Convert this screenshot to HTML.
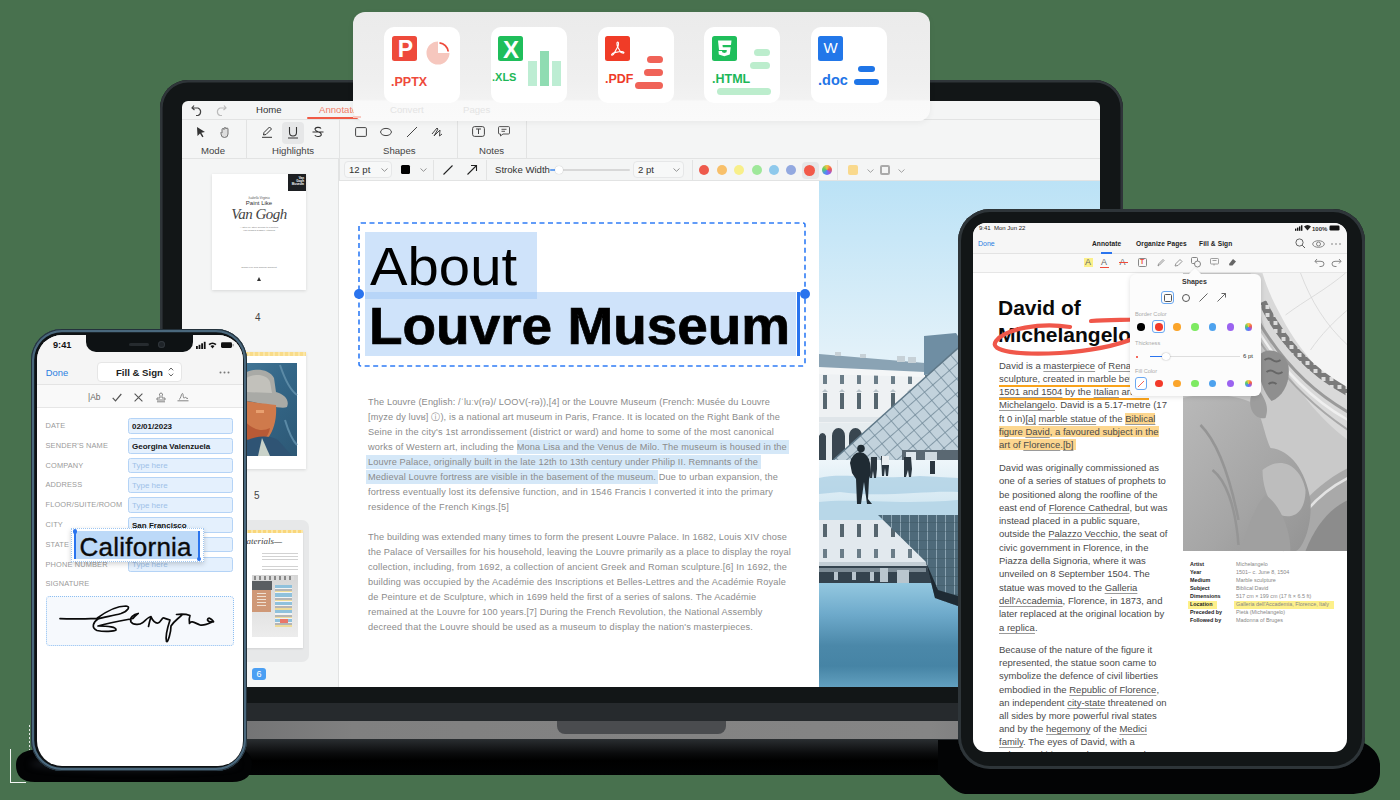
<!DOCTYPE html>
<html><head><meta charset="utf-8">
<style>
*{box-sizing:border-box;margin:0;padding:0}
html,body{width:1400px;height:800px;overflow:hidden;background:#48714e;font-family:"Liberation Sans",sans-serif}
.a{position:absolute}
svg{position:absolute;overflow:visible}
/* laptop */
#lid{left:160px;top:80px;width:963px;height:650px;background:#121617;border-radius:28px 28px 0 0;box-shadow:inset 0 0 0 2.6px #2f3539}
#base1{left:160px;top:703px;width:963px;height:18px;background:#262a2d}
#base2{left:160px;top:721px;width:963px;height:18px;background:linear-gradient(90deg,#6a6b6d,#808080 20%,#858585 80%,#6a6b6d)}
#notch{left:557px;top:721px;width:169px;height:12.5px;background:#4a4c4f;border-radius:0 0 8px 8px}
#base3{left:160px;top:739px;width:963px;height:36px;background:linear-gradient(#2a2e31,#0a0b0c 40%,#000 60%,#020304)}
#screen{left:182px;top:101px;width:918px;height:586px;background:#f4f5f5;border-radius:6px 6px 0 0;overflow:hidden}
#screen .t{position:absolute;white-space:nowrap;color:#333;font-size:9.6px;line-height:12px}
#screen .body{color:#8b8b8b;font-size:9.2px;line-height:12px}
.card{width:75.5px;height:76px;background:#fff;border-radius:10px}
.ic{width:25px;height:25px;border-radius:2.5px}
.ict{width:25px;height:25px;color:#fff;font-weight:bold;text-align:center;line-height:25px}
.ft{font-weight:bold;font-size:12.5px;line-height:14px;white-space:nowrap}
.bar{border-radius:4px}
.plab{font-size:7.4px;color:#9a9a9a;line-height:10px;white-space:nowrap;letter-spacing:0.15px}
.pin{width:104.5px;height:15.5px;background:#e4f0fd;border:1px solid #b4d3f6;border-radius:2.5px}
.pval{font-size:8px;font-weight:bold;color:#151515;line-height:11px;white-space:nowrap}
.pph{font-size:8px;color:#9ec1e8;line-height:11px;white-space:nowrap}
.tt{white-space:nowrap;line-height:1.2}
.tb{white-space:nowrap;font-size:9.5px;line-height:13px;color:#4a4a4a}
.tb u{text-decoration-color:#9a9a9a;text-decoration-thickness:0.6px;text-underline-offset:1.5px}
.yh{background:#fcd68f}
.tk{font-size:5.4px;font-weight:bold;color:#222;white-space:nowrap;line-height:7px}
.tv{font-size:5.4px;color:#888;white-space:nowrap;line-height:7px}
.dot{width:7.5px;height:7.5px;border-radius:50%}
.hl{position:absolute;height:1px;background:#e2e3e3}
.vl{position:absolute;width:1px;background:#e2e3e3}
</style></head>
<body>
<div id="lid" class="a"></div>
<div id="base1" class="a"></div>
<div id="base2" class="a"></div>
<div id="notch" class="a"></div>
<div id="base3" class="a"></div>
<div id="screen" class="a">
  <!-- tab bar -->
  <svg style="left:9px;top:3px" width="14" height="12" viewBox="0 0 14 12"><path d="M3 1.5 L1 4 L3.5 6 M1.2 4 H7 A4 4 0 0 1 7 11.5 H5" fill="none" stroke="#444" stroke-width="1.2"/></svg>
  <svg style="left:31px;top:3px" width="14" height="12" viewBox="0 0 14 12"><path d="M11 1.5 L13 4 L10.5 6 M12.8 4 H7 A4 4 0 0 0 7 11.5 H9" fill="none" stroke="#bbb" stroke-width="1.2"/></svg>
  <div class="t" style="left:74px;top:3px;color:#333">Home</div>
  <div class="t" style="left:137px;top:3px;color:#f07f6b">Annotate</div>
  <div class="a" style="left:125px;top:16px;width:54px;height:2px;background:#f05a45;border-radius:1px"></div>
  <div class="t" style="left:210px;top:3px;color:#333">Convert</div>
  <div class="t" style="left:283px;top:3px;color:#333">Pages</div>
  <div class="hl" style="left:0;top:18px;width:918px"></div>
  <!-- toolbar -->
  <div class="t" style="left:19px;top:44px;color:#444">Mode</div>
  <div class="t" style="left:90px;top:44px;color:#444">Highlights</div>
  <div class="t" style="left:201px;top:44px;color:#444">Shapes</div>
  <div class="t" style="left:297px;top:44px;color:#444">Notes</div>
  <div class="vl" style="left:64px;top:19px;height:39px"></div>
  <div class="vl" style="left:157px;top:19px;height:39px"></div>
  <div class="vl" style="left:275px;top:19px;height:39px"></div>
  <div class="vl" style="left:344px;top:19px;height:39px"></div>
  <!-- mode icons -->
  <svg style="left:13px;top:25px" width="12" height="12" viewBox="0 0 12 12"><path d="M2 1 L10 6 L6.3 6.8 L8.5 10.5 L7.3 11.2 L5 7.5 L2.5 10 Z" fill="#333"/></svg>
  <svg style="left:37px;top:25px" width="12" height="12" viewBox="0 0 12 12"><path d="M3 7 V3.5 a1 1 0 0 1 2 0 V2.5 a1 1 0 0 1 2 0 V3 a1 1 0 0 1 2 0 V8 a3.5 3.5 0 0 1 -7 0 V6" fill="#ddd" stroke="#666" stroke-width="0.9"/></svg>
  <!-- highlight icons -->
  <svg style="left:79px;top:25px" width="13" height="12" viewBox="0 0 13 12"><path d="M2.5 9 L3 6.5 L8.5 1 L10.5 3 L5 8.5 Z M1 11.3 H11" fill="none" stroke="#333" stroke-width="1"/></svg>
  <div class="a" style="left:100px;top:21px;width:22px;height:22px;background:#e6e7e8;border-radius:4px"></div>
  <svg style="left:105px;top:25px" width="12" height="13" viewBox="0 0 12 13"><path d="M2.5 1 V6.5 a3.5 3.5 0 0 0 7 0 V1 M1 12 H11" fill="none" stroke="#333" stroke-width="1.1"/></svg>
  <svg style="left:130px;top:25px" width="12" height="12" viewBox="0 0 12 12"><path d="M9 2.5 C8 1 3 0.8 3 3.3 C3 6 9.3 5.5 9.3 8.5 C9.3 11 4 11 2.8 9.3 M0.5 6 H11.5" fill="none" stroke="#333" stroke-width="1.1"/></svg>
  <!-- shape icons -->
  <svg style="left:173px;top:26px" width="12" height="10" viewBox="0 0 12 10"><rect x="0.6" y="0.6" width="10.8" height="8.8" rx="1" fill="none" stroke="#444" stroke-width="1"/></svg>
  <svg style="left:198px;top:26px" width="12" height="10" viewBox="0 0 12 10"><ellipse cx="6" cy="5" rx="5.4" ry="3.6" fill="none" stroke="#444" stroke-width="1"/></svg>
  <svg style="left:224px;top:25px" width="12" height="12" viewBox="0 0 12 12"><path d="M1 11 L11 1" stroke="#444" stroke-width="1"/></svg>
  <svg style="left:249px;top:25px" width="12" height="12" viewBox="0 0 12 12"><path d="M1 8 L6 2 L7 3 L3 10 L9 4 L8.5 10 L11 8" fill="none" stroke="#444" stroke-width="1"/></svg>
  <!-- notes icons -->
  <svg style="left:290px;top:25px" width="13" height="11" viewBox="0 0 13 11"><rect x="0.6" y="0.6" width="11.8" height="9.8" rx="2" fill="none" stroke="#444" stroke-width="1"/><path d="M4 3 H9 M6.5 3 V8" stroke="#444" stroke-width="1"/></svg>
  <svg style="left:316px;top:25px" width="12" height="11" viewBox="0 0 12 11"><path d="M1.5 0.6 H10.5 a1 1 0 0 1 1 1 V7 a1 1 0 0 1 -1 1 H5 L2.5 10 V8 H1.5 a1 1 0 0 1 -1 -1 V1.6 a1 1 0 0 1 1 -1 Z M3.5 3.3 H8.5 M3.5 5.3 H7" fill="none" stroke="#444" stroke-width="0.9"/></svg>
  <div class="hl" style="left:0;top:57px;width:918px"></div>

  <!-- format bar -->
  <div class="a" style="left:157px;top:58px;width:761px;height:22px;background:#f4f5f5;border-left:1px solid #e2e3e3;border-bottom:1px solid #e2e3e3"></div>
  <div class="a" style="left:162px;top:60px;width:48px;height:17px;border:1px solid #e6e7e8;border-radius:4px;background:#f7f8f8"></div>
  <div class="t" style="left:167px;top:63px">12 pt</div>
  <svg style="left:199px;top:67px" width="7" height="4" viewBox="0 0 7 4"><path d="M0.5 0.5 L3.5 3.3 L6.5 0.5" fill="none" stroke="#888" stroke-width="0.9"/></svg>
  <div class="a" style="left:219px;top:64px;width:9px;height:9px;background:#000;border-radius:1.5px"></div>
  <svg style="left:238px;top:67px" width="7" height="4" viewBox="0 0 7 4"><path d="M0.5 0.5 L3.5 3.3 L6.5 0.5" fill="none" stroke="#888" stroke-width="0.9"/></svg>
  <div class="vl" style="left:251px;top:59px;height:21px"></div>
  <svg style="left:261px;top:64px" width="10" height="10" viewBox="0 0 10 10"><path d="M0.5 9.5 L9.5 0.5" stroke="#222" stroke-width="1.1"/></svg>
  <svg style="left:285px;top:64px" width="10" height="10" viewBox="0 0 10 10"><path d="M0.5 9.5 L9.5 0.5 M4 0.5 H9.5 V6" fill="none" stroke="#222" stroke-width="1.1"/></svg>
  <div class="vl" style="left:304px;top:59px;height:21px"></div>
  <div class="t" style="left:313px;top:63px">Stroke Width</div>
  <div class="a" style="left:368px;top:68px;width:80px;height:2px;background:#d8d8d8;border-radius:1px"></div>
  <div class="a" style="left:368px;top:68px;width:8px;height:2px;background:#6aa3f0;border-radius:1px"></div>
  <div class="a" style="left:373px;top:65px;width:8px;height:8px;background:#fff;border-radius:50%;box-shadow:0 0 1px rgba(0,0,0,.3)"></div>
  <div class="a" style="left:451px;top:60px;width:51px;height:17px;border:1px solid #e6e7e8;border-radius:4px;background:#f7f8f8"></div>
  <div class="t" style="left:456px;top:63px">2 pt</div>
  <svg style="left:491px;top:67px" width="7" height="4" viewBox="0 0 7 4"><path d="M0.5 0.5 L3.5 3.3 L6.5 0.5" fill="none" stroke="#888" stroke-width="0.9"/></svg>
  <div class="vl" style="left:510px;top:59px;height:21px"></div>
  <div class="a" style="left:517px;top:64px;width:10px;height:10px;border-radius:50%;background:#ee5a4c"></div>
  <div class="a" style="left:535px;top:64px;width:10px;height:10px;border-radius:50%;background:#f8c06a"></div>
  <div class="a" style="left:552px;top:64px;width:10px;height:10px;border-radius:50%;background:#f8ef8a"></div>
  <div class="a" style="left:570px;top:64px;width:10px;height:10px;border-radius:50%;background:#9fe89a"></div>
  <div class="a" style="left:587px;top:64px;width:10px;height:10px;border-radius:50%;background:#8ec9ec"></div>
  <div class="a" style="left:604px;top:64px;width:10px;height:10px;border-radius:50%;background:#93a9e0"></div>
  <div class="a" style="left:620px;top:61px;width:17px;height:17px;border-radius:4px;background:#e6e7e8"></div>
  <div class="a" style="left:622px;top:64px;width:11px;height:11px;border-radius:50%;background:#f25a4a"></div>
  <div class="a" style="left:640px;top:64px;width:10px;height:10px;border-radius:50%;background:conic-gradient(#f6c343,#f25a4a,#8e5cf2,#4a90f0,#5fd05f,#f6c343)"></div>
  <div class="vl" style="left:655px;top:59px;height:21px"></div>
  <div class="a" style="left:666px;top:64px;width:10px;height:10px;border-radius:2px;background:#f9d98d"></div>
  <svg style="left:685px;top:68px" width="7" height="4" viewBox="0 0 7 4"><path d="M0.5 0.5 L3.5 3.3 L6.5 0.5" fill="none" stroke="#999" stroke-width="0.9"/></svg>
  <div class="a" style="left:698px;top:64px;width:10px;height:10px;border-radius:2px;border:2px solid #aaa"></div>
  <svg style="left:716px;top:68px" width="7" height="4" viewBox="0 0 7 4"><path d="M0.5 0.5 L3.5 3.3 L6.5 0.5" fill="none" stroke="#999" stroke-width="0.9"/></svg>
  <!-- sidebar -->
  <div class="vl" style="left:156px;top:58px;height:528px"></div>
  <!-- sidebar thumbs -->
  <div class="a" style="left:30px;top:73px;width:94px;height:116px;background:#fff;box-shadow:0 1px 3px rgba(0,0,0,.12)"></div>
  <div class="a" style="left:106px;top:73px;width:18px;height:17px;background:#1d1f22"></div>
  <div class="a" style="left:109px;top:76px;width:13px;font-size:3px;line-height:3.2px;color:#fff;text-align:right;font-weight:bold">Van<br>Gogh<br>Museum</div>
  <div class="a" style="left:55px;top:95px;width:44px;text-align:center;font-size:3px;color:#555;font-style:italic">Isabella Virginia</div>
  <div class="a" style="left:40px;top:99px;width:74px;text-align:center;font-size:6px;color:#333">Paint Like</div>
  <div class="a" style="left:35px;top:104px;width:84px;text-align:center;font-family:'Liberation Serif',serif;font-style:italic;font-size:15px;line-height:18px;color:#444;letter-spacing:-0.5px">Van Gogh</div>
  <div class="a" style="left:45px;top:125px;width:64px;text-align:center;font-size:2.5px;line-height:3px;color:#777">A Step-by-Step Course to Painting<br>Van Gogh's Classic Artworks</div>
  <div class="a" style="left:45px;top:165px;width:64px;text-align:center;font-size:2.5px;color:#777">Susan Lee and Joanne Shumelt</div>
  <div class="a" style="left:75px;top:176px;width:4px;height:4px;background:#333;clip-path:polygon(50% 0,100% 100%,0 100%)"></div>
  <div class="t" style="left:73px;top:211px;font-size:10px;color:#444">4</div>
  <div class="a" style="left:28px;top:251px;width:96px;height:117px;background:#fff;box-shadow:0 1px 3px rgba(0,0,0,.12)"></div>
  <div class="a" style="left:28px;top:251px;width:96px;height:4px;background:repeating-linear-gradient(90deg,#f9dc8a 0 3px,#fbe7a9 3px 5px)"></div>
  <svg style="left:36px;top:262px" width="79" height="93" viewBox="218 363 79 93"><defs><linearGradient id="vgb" x1="0" y1="0" x2="1" y2="1"><stop offset="0" stop-color="#4a7d9c"/><stop offset="0.5" stop-color="#336687"/><stop offset="1" stop-color="#2d5875"/></linearGradient></defs>
    <rect x="218" y="363" width="79" height="93" fill="url(#vgb)"/>
    <path d="M240 378 C245 368 268 366 274 378 L276 392 C284 394 290 400 287 407 C280 410 260 402 240 400 Z" fill="#a9aaa6"/>
    <path d="M244 380 C250 374 266 372 270 382 L272 393 L246 392 Z" fill="#c2c1bb"/>
    <path d="M242 400 C255 403 268 404 276 405 C277 418 274 430 268 438 C258 444 246 440 242 430 Z" fill="#cf7a4c"/>
    <path d="M244 420 C252 430 262 432 270 428 C268 440 258 446 248 444 Z" fill="#b85a36"/>
    <path d="M256 410 h8 v3 h-8 Z" fill="#e8a070"/>
    <path d="M240 445 C250 436 268 434 278 440 L292 456 H240 Z" fill="#2f5474"/>
    <path d="M262 438 L270 456 L258 456 Z" fill="#c9d2c9"/>
    <path d="M280 365 C285 380 290 390 297 395 M285 420 C288 430 292 440 297 445" stroke="#5b8aa6" stroke-width="2" fill="none"/>
  </svg>
  <div class="t" style="left:72px;top:389px;font-size:10px;color:#444">5</div>
  <div class="a" style="left:22px;top:419px;width:105px;height:142px;background:#e7e8e9;border-radius:7px"></div>
  <div class="a" style="left:26px;top:429px;width:95px;height:118px;background:#fff;box-shadow:0 1px 2px rgba(0,0,0,.1)"></div>
  <div class="a" style="left:26px;top:429px;width:95px;height:3px;background:repeating-linear-gradient(90deg,#f9d67a 0 3px,#fbe7a9 3px 5px)"></div>
  <div class="a" style="left:57px;top:435px;font-family:'Liberation Serif',serif;font-style:italic;font-size:9px;color:#444">Materials—</div>
  <div class="a" style="left:30px;top:452px;width:18px;height:16px;background:repeating-linear-gradient(#f0b640 0 1.2px,transparent 1.2px 3px)"></div>
  <div class="a" style="left:80px;top:452px;width:36px;height:18px;background:repeating-linear-gradient(#d2d2d2 0 0.8px,transparent 0.8px 3.2px)"></div>
  <div class="a" style="left:70px;top:474px;width:46px;height:62px;background:linear-gradient(#d6d6d6,#ececec)"></div>
  <div class="a" style="left:70px;top:480px;width:20px;height:9px;background:#5a5e62"></div>
  <div class="a" style="left:70px;top:489px;width:19px;height:22px;background:#cf9877"></div>
  <div class="a" style="left:75px;top:492px;width:9px;height:14px;background:repeating-linear-gradient(#efe0d2 0 1px,transparent 1px 3px)"></div>
  <div class="a" style="left:93px;top:484px;width:17px;height:42px;background:repeating-linear-gradient(#8fc1dc 0 3px,#f3f3f3 3px 4.5px,#b5b5b5 4.5px 6px,#eedc9a 6px 7.5px,#f3f3f3 7.5px 8.5px)"></div>
  <div class="a" style="left:98px;top:518px;width:8px;height:4px;background:#e9776a"></div>
  <div class="a" style="left:72px;top:475px;width:40px;height:4px;background:repeating-linear-gradient(90deg,#888 0 2px,#ddd 2px 5px)"></div>
  <div class="a" style="left:70px;top:567px;width:14px;height:12px;background:#4b9ff3;border-radius:3px;color:#fff;font-size:9px;line-height:12px;text-align:center">6</div>
  <!-- document -->
  <div class="a" style="left:157px;top:80px;width:480px;height:506px;background:#fff"></div>
  <!-- highlights -->
  <div class="a" style="left:335px;top:338.6px;width:272px;height:14px;background:#d5e8f8"></div>
  <div class="a" style="left:184px;top:353.6px;width:395px;height:14px;background:#d5e8f8"></div>
  <div class="a" style="left:184px;top:368.6px;width:292px;height:14px;background:#d5e8f8"></div>
  <div class="t body" style="left:186px;top:294.6px;letter-spacing:0.128px">The Louvre (English: /ˈluːv(rə)/ LOOV(-rə)),[4] or the Louvre Museum (French: Musée du Louvre</div>
  <div class="t body" style="left:186px;top:309.6px;letter-spacing:0.140px">[myze dy luvʁ] ⓘ), is a national art museum in Paris, France. It is located on the Right Bank of the</div>
  <div class="t body" style="left:186px;top:324.6px;letter-spacing:0.184px">Seine in the city's 1st arrondissement (district or ward) and home to some of the most canonical</div>
  <div class="t body" style="left:186px;top:339.6px;letter-spacing:0.148px">works of Western art, including the Mona Lisa and the Venus de Milo. The museum is housed in the</div>
  <div class="t body" style="left:186px;top:354.6px;letter-spacing:0.135px">Louvre Palace, originally built in the late 12th to 13th century under Philip II. Remnants of the</div>
  <div class="t body" style="left:186px;top:369.6px;letter-spacing:0.144px">Medieval Louvre fortress are visible in the basement of the museum. Due to urban expansion, the</div>
  <div class="t body" style="left:186px;top:384.6px;letter-spacing:0.184px">fortress eventually lost its defensive function, and in 1546 Francis I converted it into the primary</div>
  <div class="t body" style="left:186px;top:399.6px;letter-spacing:0.187px">residence of the French Kings.[5]</div>
  <div class="t body" style="left:186px;top:429.8px;letter-spacing:0.125px">The building was extended many times to form the present Louvre Palace. In 1682, Louis XIV chose</div>
  <div class="t body" style="left:186px;top:444.8px;letter-spacing:0.134px">the Palace of Versailles for his household, leaving the Louvre primarily as a place to display the royal</div>
  <div class="t body" style="left:186px;top:459.8px;letter-spacing:0.181px">collection, including, from 1692, a collection of ancient Greek and Roman sculpture.[6] In 1692, the</div>
  <div class="t body" style="left:186px;top:474.8px;letter-spacing:0.157px">building was occupied by the Académie des Inscriptions et Belles-Lettres and the Académie Royale</div>
  <div class="t body" style="left:186px;top:489.8px;letter-spacing:0.163px">de Peinture et de Sculpture, which in 1699 held the first of a series of salons. The Académie</div>
  <div class="t body" style="left:186px;top:504.8px;letter-spacing:0.141px">remained at the Louvre for 100 years.[7] During the French Revolution, the National Assembly</div>
  <div class="t body" style="left:186px;top:519.8px;letter-spacing:0.171px">decreed that the Louvre should be used as a museum to display the nation's masterpieces.</div>
  <!-- title -->
  <div class="a" style="left:183px;top:131px;width:172px;height:67px;background:rgba(160,200,245,.5)"></div>
  <div class="a" style="left:183px;top:191px;width:431px;height:64px;background:rgba(160,200,245,.5)"></div>
  <svg style="left:176px;top:121px" width="448" height="145" viewBox="0 0 448 145"><rect x="1" y="1" width="446" height="143" rx="2" fill="none" stroke="#2f7cf6" stroke-width="1.6" stroke-dasharray="5 3.5"/></svg>
  <div class="a" style="left:171.5px;top:187.5px;width:10px;height:10px;border-radius:50%;background:#2a74ee"></div>
  <div class="a" style="left:618px;top:187.5px;width:10px;height:10px;border-radius:50%;background:#2a74ee"></div>
  <div class="a" style="left:615px;top:191px;width:2.5px;height:64px;background:#2a74ee"></div>
  <div class="a" style="left:187.5px;top:136px;font-size:53px;line-height:60px;color:#000;white-space:nowrap;transform:scaleX(1.062);transform-origin:0 0">About</div>
  <div class="a" style="left:186.5px;top:196px;font-size:51px;line-height:60px;font-weight:bold;color:#000;-webkit-text-stroke:0.7px #000;white-space:nowrap;transform:scaleX(1.077);transform-origin:0 0">Louvre Museum</div>
  <svg id="photo" style="left:637px;top:80px" width="281" height="506" viewBox="819 181 281 506">
    <defs>
      <linearGradient id="sky" x1="0" y1="0" x2="0" y2="1"><stop offset="0" stop-color="#bbe2f6"/><stop offset="0.34" stop-color="#e2f1f9"/><stop offset="1" stop-color="#eef7fb"/></linearGradient>
      <linearGradient id="water" x1="0" y1="0" x2="0" y2="1"><stop offset="0" stop-color="#94c8e0"/><stop offset="0.3" stop-color="#6eaacb"/><stop offset="0.6" stop-color="#4b88a9"/><stop offset="0.8" stop-color="#4684a5"/><stop offset="1" stop-color="#62a0bf"/></linearGradient>
      <linearGradient id="ground" x1="0" y1="0" x2="0" y2="1"><stop offset="0" stop-color="#eef6fa"/><stop offset="1" stop-color="#c9e2ef"/></linearGradient>
      <pattern id="lat" width="11" height="11" patternUnits="userSpaceOnUse" patternTransform="rotate(-41)"><rect width="11" height="11" fill="#c2d2dc"/><path d="M0 0 H11 M0 0 V11" stroke="#6d8595" stroke-width="1.4"/></pattern>
      <pattern id="latr" width="9" height="9" patternUnits="userSpaceOnUse"><rect width="9" height="9" fill="#4e6a7a"/><path d="M0 0 V9" stroke="#b5cad6" stroke-width="1.2"/><path d="M0 0 H9" stroke="#3a5260" stroke-width="0.8"/></pattern>
      <pattern id="win" width="17" height="60" patternUnits="userSpaceOnUse" x="821" y="372"><rect width="17" height="60" fill="#eef1f3"/><rect x="2" y="3" width="4" height="9" fill="#6b7d88"/><rect x="2" y="21" width="4" height="16" fill="#56666f"/><path d="M1 20 L4 17 L7 20 Z" fill="#b8c3ca"/></pattern>
      <pattern id="winr" width="17" height="46" patternUnits="userSpaceOnUse" x="821" y="522"><rect width="17" height="46" fill="#e2e9ee"/><rect x="2" y="2" width="4" height="13" fill="#56666f"/><rect x="2" y="27" width="4" height="9" fill="#6b7d88"/></pattern>
    </defs>
    <rect x="819" y="181" width="281" height="506" fill="url(#sky)"/>
    <!-- building -->
    <rect x="819" y="364" width="112" height="96" fill="url(#win)"/>
    <path d="M819 354 L925 363 L925 373 L819 369 Z" fill="#8aa3b4"/>
    <path d="M819 367 L925 372 L925 377 L819 374 Z" fill="#f4f6f7"/>
    <path d="M835 352 h6 v4 h-6 Z M860 354 h6 v4 h-6 Z M897 356 h8 v6 h-8 Z M908 357 h8 v6 h-8 Z" fill="#c7d1d7"/>
    <rect x="819" y="417" width="112" height="5" fill="#dfe5e9"/>
    <path d="M819 423 H931 V462 H819 Z" fill="#e6ecef"/>
    <path d="M819 462 V436 a4 6 0 0 1 7 0 V462 Z M832 462 V436 a6.5 8 0 0 1 13 0 V462 Z M849 462 V436 a6.5 8 0 0 1 13 0 V462 Z" fill="#394650"/>
    <path d="M924 336 L956 333 L958 336 V372 L924 375 Z" fill="#6f8ea3"/>
    <!-- pyramid -->
    <path d="M830 463 L958 348 L958 463 Z" fill="url(#lat)"/>
    <path d="M830 463 L958 348" stroke="#5f7888" stroke-width="1.6"/>
    <rect x="902" y="450" width="56" height="11" fill="#5a6872"/><rect x="906" y="452" width="10" height="8" fill="#dfe7ec"/><rect x="925" y="452" width="12" height="8" fill="#cfd9df"/>
    <!-- ground -->
    <rect x="819" y="460" width="140" height="62" fill="url(#ground)"/>
    <path d="M819 478 C840 472 880 480 920 476 L958 478 V492 C930 490 880 498 840 492 L819 494 Z" fill="#a8cde2" opacity=".7"/>
    <path d="M819 502 C850 498 900 505 958 500 V522 H819 Z" fill="#b8d7e8"/>
    <!-- people -->
    <path d="M850 463 q2 -10 10 -11 q8 1 10 11 l1 10 l-2 6 l-1 20 l4 5 h-5 l-3 -22 l-3 22 h-4 l-1 -25 l-4 -6 Z" fill="#1f2b33"/>
    <circle cx="861" cy="448.5" r="3.8" fill="#1f2b33"/>
    <path d="M871 457 h6 v12 l-1 9 h-2 l-1 -7 l-1 7 h-2 Z M881 456 h8 v10 l-1 10 h-2 l-1 -8 l-1 8 h-2 Z M904 457 h7 l1 12 l-1 8 h-2 l-1 -7 l-2 7 h-2 Z M930 461 h5 v13 h-5 Z" fill="#2b3740"/>
    <rect x="882" y="456" width="7" height="9" fill="#e9eef1"/>
    <!-- reflection -->
    <rect x="819" y="520" width="140" height="48" fill="url(#winr)"/>
    <rect x="819" y="562" width="140" height="6" fill="#c3ced5"/>
    <rect x="819" y="566" width="140" height="18" fill="#34434e"/>
    <path d="M819 568 H926 V572 H819 Z" fill="#7d8c96"/>
    <path d="M834 572 h4 v8 h-4 Z M852 572 h4 v8 h-4 Z M870 572 h4 v9 h-4 Z M880 568 h8 v14 h-8 Z M897 570 h12 v16 h-12 Z" fill="#b9c6ce"/>
    <rect x="819" y="583" width="140" height="104" fill="url(#water)"/>
    <path d="M878 515 L958 515 L958 606 L935 598 L926 562 Z" fill="url(#latr)"/>
        <path d="M926 562 L935 598 L958 606 L958 596 L938 590 Z" fill="#1e2a33"/>
  </svg>
</div>
<div class="a" style="left:10px;top:749px;width:1px;height:34px;background:#f4f6f4"></div>
<div class="a" style="left:10px;top:782px;width:16px;height:1px;background:#f4f6f4"></div>
<div class="a" style="left:29px;top:725px;width:1px;height:25px;background:repeating-linear-gradient(#e8ece8 0 2px,transparent 2px 4px)"></div>
<!-- phone shadow -->
<svg style="left:0;top:0" width="1400" height="800" viewBox="0 0 1400 800"><path d="M16 765 C16 752 28 749 45 749 L235 749 C248 749 252 756 252 765 C252 775 246 782 232 782 L35 782 C22 782 16 776 16 765 Z" fill="#020304"/></svg>
<div class="a" style="left:30px;top:757px;width:208px;height:14px;border-radius:50%;background:#15181d;filter:blur(3px)"></div>
<!-- phone -->
<div class="a" style="left:31px;top:329px;width:216px;height:442px;border-radius:31px;background:#0e1214;box-shadow:inset 0 0 0 1px #24323c,inset 0 0 0 3.2px #4a687d"></div>
<div class="a" id="pscreen" style="left:36.5px;top:335px;width:206.5px;height:431px;border-radius:25px;background:#fff;overflow:hidden">
  <div class="a" style="left:0;top:0;width:207px;height:50px;background:#f5f5f5;border-bottom:1px solid #e4e4e4"></div>
  <div class="a" style="left:0;top:50px;width:207px;height:22.5px;background:#f9f9f9;border-bottom:1px solid #e6e6e6"></div>
</div>
<div class="a" style="left:86px;top:333px;width:106.5px;height:18.5px;background:#0e1214;border-radius:0 0 10px 10px"></div>
<div class="a" style="left:129px;top:343px;width:20px;height:3px;background:#262b2f;border-radius:2px"></div>
<div class="a" style="left:157.5px;top:341px;width:7px;height:7px;background:#1f2429;border-radius:50%;box-shadow:inset 0 0 0 1px #30363b"></div>
<div class="a" style="left:53px;top:340px;font-size:9.2px;font-weight:bold;color:#111;line-height:10px">9:41</div>
<svg style="left:196px;top:341px" width="40" height="8" viewBox="0 0 40 8"><rect x="0" y="5" width="1.8" height="3" fill="#111"/><rect x="2.6" y="3.8" width="1.8" height="4.2" fill="#111"/><rect x="5.2" y="2.3" width="1.8" height="5.7" fill="#111"/><rect x="7.8" y="0.8" width="1.8" height="7.2" fill="#111"/><path d="M12.5 3 A6 6 0 0 1 20.5 3 L19.3 4.3 A4.2 4.2 0 0 0 13.7 4.3 Z M14.5 5 A3.3 3.3 0 0 1 18.5 5 L16.5 7.5 Z" fill="#111"/><rect x="25" y="1.3" width="11" height="5.6" rx="1.3" fill="#111"/><rect x="36.6" y="3" width="1" height="2.3" fill="#888"/></svg>
<div class="a" style="left:45.7px;top:367px;font-size:9.4px;color:#2a7de1;line-height:11px">Done</div>
<div class="a" style="left:96.7px;top:361.7px;width:85px;height:20px;background:#fff;border:1px solid #e6e6e6;border-radius:4px"></div>
<div class="a" style="left:116px;top:367px;font-size:9.6px;font-weight:bold;color:#222;line-height:11px">Fill &amp; Sign</div>
<svg style="left:168px;top:367px" width="6" height="10" viewBox="0 0 6 10"><path d="M0.8 3.3 L3 1 L5.2 3.3 M0.8 6.7 L3 9 L5.2 6.7" fill="none" stroke="#555" stroke-width="0.9"/></svg>
<svg style="left:219px;top:370.5px" width="12" height="3" viewBox="0 0 12 3"><circle cx="1.5" cy="1.5" r="1" fill="#777"/><circle cx="5.5" cy="1.5" r="1" fill="#777"/><circle cx="9.5" cy="1.5" r="1" fill="#777"/></svg>
<div class="a" style="left:88px;top:392px;font-size:8.4px;color:#666;line-height:11px">|Ab</div>
<svg style="left:112px;top:393px" width="10" height="9" viewBox="0 0 10 9"><path d="M0.7 4.8 L3.5 7.8 L9.3 1" fill="none" stroke="#555" stroke-width="1.2"/></svg>
<svg style="left:134px;top:393px" width="9" height="9" viewBox="0 0 9 9"><path d="M0.6 0.6 L8.4 8.4 M8.4 0.6 L0.6 8.4" stroke="#555" stroke-width="1.1"/></svg>
<svg style="left:156px;top:392px" width="10" height="11" viewBox="0 0 10 11"><path d="M5 1 a1.6 1.6 0 0 1 1 2.8 V6 H9 V8 H1 V6 H4 V3.8 A1.6 1.6 0 0 1 5 1 Z M1 9.8 H9" fill="none" stroke="#777" stroke-width="0.9"/></svg>
<svg style="left:177px;top:392px" width="12" height="11" viewBox="0 0 12 11"><path d="M2 7.5 C4 7 4 2 5.3 1.5 C6.5 1 6 7 7.2 6 C8 5.5 8.5 4.5 9 6 L11 6.5 M0.5 8.8 H11.5" fill="none" stroke="#777" stroke-width="0.9"/></svg>
<div class="a plab" style="left:45.5px;top:421.0px">DATE</div>
<div class="a pin" style="left:128px;top:418.25px"></div>
<div class="a pval" style="left:132px;top:420.5px">02/01/2023</div>
<div class="a plab" style="left:45.5px;top:441.0px">SENDER'S NAME</div>
<div class="a pin" style="left:128px;top:438.25px"></div>
<div class="a pval" style="left:132px;top:440.5px">Georgina Valenzuela</div>
<div class="a plab" style="left:45.5px;top:460.5px">COMPANY</div>
<div class="a pin" style="left:128px;top:457.75px"></div>
<div class="a pph" style="left:132px;top:460.0px">Type here</div>
<div class="a plab" style="left:45.5px;top:480.0px">ADDRESS</div>
<div class="a pin" style="left:128px;top:477.25px"></div>
<div class="a pph" style="left:132px;top:479.5px">Type here</div>
<div class="a plab" style="left:45.5px;top:500.0px">FLOOR/SUITE/ROOM</div>
<div class="a pin" style="left:128px;top:497.25px"></div>
<div class="a pph" style="left:132px;top:499.5px">Type here</div>
<div class="a plab" style="left:45.5px;top:520.0px">CITY</div>
<div class="a pin" style="left:128px;top:517.25px"></div>
<div class="a pval" style="left:132px;top:519.5px">San Francisco</div>
<div class="a plab" style="left:45.5px;top:539.5px">STATE</div>
<div class="a pin" style="left:128px;top:536.75px"></div>
<div class="a plab" style="left:45.5px;top:559.5px">PHONE NUMBER</div>
<div class="a pin" style="left:128px;top:556.75px"></div>
<div class="a pph" style="left:132px;top:559.0px">Type here</div>
<div class="a plab" style="left:45.5px;top:579px">SIGNATURE</div>
<!-- signature -->
<div class="a" style="left:46px;top:596px;width:187.5px;height:49.5px;border:1.2px dotted #8cbef2;border-radius:4px;background:#f6f9fd"></div>
<svg style="left:46px;top:596px" width="188" height="50" viewBox="46 596 188 50"><path d="M60 618.6 C72 619 85 618.8 97 618.3 C104 613 116 606 126 606 C131 606.5 128 611 121 613.5 C113 616 103 617 98 619 C93 622 91 628 97 630.5 C104 632 114 631.5 116 630 C117 627 108 626 98 626 C108 623 122 620.5 133 618.5 C136 615 139 613 138 613.5 C134 614 129 618 131 622 C133 625 140 625 142 623 C145 621 148 617 151 616.5 C150 620 149 624 148.5 626.5 M151 617 C153 621 155 623.5 158 623 C161 622 162 617 164 618 C166 619 169 619.5 170 620 C168 626 165 636 166.5 641.5 C168 643 171 632 171 626 C174 621 178 619 182 614.8 M176.5 614.5 C181 614 186 614 190 615.5 C189 618 189 621 189.5 623.5 C191 620 195 623 200 625 C205 626 210 623 213.5 621.5 C211 618 208 617 207.5 620 C208 622 211 622 213.5 621.8" fill="none" stroke="#0a0a0a" stroke-width="1.7" stroke-linecap="round" stroke-linejoin="round"/></svg>
<!-- california popup -->
<div class="a" style="left:70.5px;top:527.5px;width:133px;height:34.5px;background:#fff;border:1px dotted #9ec6f2;box-shadow:0 2px 5px rgba(0,0,0,.18)"></div>
<div class="a" style="left:75px;top:531px;width:124px;height:28px;background:#bcd9f8"></div>
<div class="a" style="left:79.5px;top:531.5px;font-size:26px;color:#0b0b0b;line-height:30px;white-space:nowrap;letter-spacing:0.25px;-webkit-text-stroke:0.35px #0b0b0b">California</div>
<div class="a" style="left:74.3px;top:531px;width:1.6px;height:28px;background:#2a74ee"></div>
<div class="a" style="left:72.8px;top:529px;width:4.6px;height:4.6px;border-radius:50%;background:#2a74ee"></div>
<div class="a" style="left:198px;top:531px;width:1.6px;height:28px;background:#2a74ee"></div>
<div class="a" style="left:196.5px;top:556.5px;width:4.6px;height:4.6px;border-radius:50%;background:#2a74ee"></div>
<!-- tablet shadow -->
<svg style="left:0;top:0" width="1400" height="800" viewBox="0 0 1400 800"><path d="M938 770 L938 774 C945 778 952 792 965 794 L1350 794 C1370 794 1380 785 1380 772 L1380 765 C1380 755 1372 746 1362 742 L1362 740 L938 740 Z" fill="#030405"/></svg>
<!-- tablet -->
<div class="a" style="left:957.5px;top:208.5px;width:407.5px;height:560.5px;border-radius:32px;background:#121617;box-shadow:inset 0 0 0 3px #2e3539"></div>
<div class="a" id="tscreen" style="left:973px;top:223px;width:374px;height:529px;border-radius:13px;background:#fff;overflow:hidden">
  <div class="a" style="left:0;top:0;width:374px;height:31px;background:#f6f6f6;border-bottom:1px solid #e3e3e3"></div>
  <div class="a" style="left:0;top:31px;width:374px;height:18.5px;background:#f9f9f9;border-bottom:1px solid #e6e6e6"></div>
  <div class="a tt" style="left:6.0px;top:1.5px;font-size:6px;color:#222">9:41&nbsp;&nbsp;Mon Jun 22</div>
  <svg style="left:322px;top:2px" width="46" height="6" viewBox="0 0 46 6"><rect x="0" y="3.6" width="1.4" height="2.2" fill="#111"/><rect x="2" y="2.6" width="1.4" height="3.2" fill="#111"/><rect x="4" y="1.4" width="1.4" height="4.4" fill="#111"/><rect x="6" y="0.3" width="1.4" height="5.5" fill="#111"/><path d="M9 1.5 A5.2 5.2 0 0 1 16 1.5 L12.5 5.6 Z" fill="#222"/><text x="17" y="5.6" font-size="6" font-weight="bold" font-family="Liberation Sans" fill="#333">100%</text><rect x="34.5" y="0.6" width="10" height="4.8" rx="1.2" fill="#111"/></svg>
  <div class="a tt" style="left:5.0px;top:16.5px;font-size:7px;color:#2a7de1">Done</div>
  <div class="a tt" style="left:119.0px;top:16.5px;font-size:6.6px;color:#222;font-weight:bold;letter-spacing:0.1px">Annotate</div>
  <div class="a tt" style="left:163.0px;top:16.5px;font-size:6.6px;color:#222;font-weight:bold;letter-spacing:0.1px">Organize Pages</div>
  <div class="a tt" style="left:226.0px;top:16.5px;font-size:6.6px;color:#222;font-weight:bold;letter-spacing:0.1px">Fill &amp; Sign</div>
  <div class="a" style="left:127.6px;top:29.0px;width:11.3px;height:2px;background:#2a74ee"></div>
  <svg style="left:322.0px;top:15.0px" width="11" height="11" viewBox="0 0 11 11"><circle cx="4.5" cy="4.5" r="3.6" fill="none" stroke="#555" stroke-width="0.9"/><path d="M7.2 7.2 L10 10" stroke="#555" stroke-width="1"/></svg>
  <svg style="left:339.0px;top:16.5px" width="13" height="8" viewBox="0 0 13 8"><ellipse cx="6.5" cy="4" rx="5.8" ry="3.3" fill="none" stroke="#777" stroke-width="0.9"/><circle cx="6.5" cy="4" r="2" fill="none" stroke="#777" stroke-width="0.9"/></svg>
  <svg style="left:358.0px;top:19.5px" width="10" height="2" viewBox="0 0 10 2"><circle cx="1" cy="1" r="0.8" fill="#777"/><circle cx="5" cy="1" r="0.8" fill="#777"/><circle cx="9" cy="1" r="0.8" fill="#777"/></svg>
  <!-- toolbar icons -->
  <div class="a" style="left:110.5px;top:34.5px;width:9.5px;height:9.5px;background:#fbf08a"></div>
  <div class="a tt" style="left:112.0px;top:34.0px;font-size:9px;color:#666">A</div>
  <div class="a tt" style="left:128.0px;top:34.0px;font-size:9px;color:#666">A</div>
  <div class="a" style="left:127.0px;top:43.5px;width:9px;height:1px;background:#f04a3a"></div>
  <div class="a tt" style="left:146.5px;top:34.0px;font-size:9px;color:#666">A</div>
  <div class="a" style="left:145.5px;top:39.0px;width:9.5px;height:1px;background:#f04a3a"></div>
  <div class="a" style="left:165.0px;top:35.0px;width:8.5px;height:9px;border:1px solid #888;border-radius:1.5px"></div>
  <div class="a tt" style="left:167.0px;top:35.0px;font-size:7px;color:#f04a3a;font-weight:bold">T</div>
  <svg style="left:184.0px;top:35.0px" width="8" height="9" viewBox="0 0 8 9"><path d="M1 8 L1.5 6 L6 1.5 L7 2.5 L2.5 7 Z" fill="none" stroke="#888" stroke-width="0.9"/></svg>
  <svg style="left:201.0px;top:35.0px" width="9" height="9" viewBox="0 0 9 9"><path d="M1 8 L2 5.5 L6 1.5 L8 3.5 L4 7.5 Z" fill="none" stroke="#888" stroke-width="0.9"/></svg>
  <svg style="left:218.0px;top:34.0px" width="10" height="11" viewBox="0 0 10 11"><rect x="0.5" y="0.5" width="6" height="6" rx="1" fill="none" stroke="#777" stroke-width="0.9"/><circle cx="6.5" cy="7" r="3" fill="#f9f9f9" stroke="#777" stroke-width="0.9"/></svg>
  <svg style="left:237.0px;top:35.0px" width="9" height="8" viewBox="0 0 9 8"><rect x="0.5" y="0.5" width="8" height="5.5" rx="0.8" fill="none" stroke="#888" stroke-width="0.8"/><path d="M2.5 2.5 H6.5 M4 6 V7.5" stroke="#888" stroke-width="0.8"/></svg>
  <svg style="left:255.0px;top:34.0px" width="9" height="10" viewBox="0 0 9 10"><path d="M1 7 L5 2 L8 4.5 L4.5 8.5 H1.5 Z" fill="#666"/></svg>
  <svg style="left:341.0px;top:35.0px" width="11" height="9" viewBox="0 0 11 9"><path d="M3 1 L1 3.3 L3 5.5 M1.2 3.3 H7 A3 2.6 0 0 1 7 8.5 H5.5" fill="none" stroke="#777" stroke-width="0.9"/></svg>
  <svg style="left:358.0px;top:35.0px" width="11" height="9" viewBox="0 0 11 9"><path d="M8 1 L10 3.3 L8 5.5 M9.8 3.3 H4 A3 2.6 0 0 0 4 8.5 H5.5" fill="none" stroke="#777" stroke-width="0.9"/></svg>
  <!-- statue photo -->
  <svg id="statue" style="left:209.5px;top:50px" width="165" height="278" viewBox="1182.5 273 165 278">
    <defs><pattern id="dent" width="8" height="8" patternUnits="userSpaceOnUse"><rect width="8" height="8" fill="#7a7a7a"/><rect x="1" y="1" width="4" height="4" fill="#dcdcdc"/></pattern>
    <linearGradient id="bod" x1="0" y1="0" x2="1" y2="1"><stop offset="0" stop-color="#b9b9b9"/><stop offset="0.6" stop-color="#a5a5a5"/><stop offset="1" stop-color="#939393"/></linearGradient></defs>
    <rect x="1182.5" y="273" width="165" height="278" fill="#c9c9c9"/>
    <path d="M1250 273 H1347.5 V440 C1320 420 1285 380 1265 330 C1258 310 1255 290 1250 273 Z" fill="#d9d9d9"/>
    <path d="M1262 273 H1347.5 V395 C1320 375 1295 345 1280 315 C1272 300 1266 287 1262 273 Z" fill="#f4f4f4"/>
    <path d="M1300 273 C1310 300 1325 325 1347 345 M1285 315 C1305 300 1325 290 1345 273 M1310 350 C1320 335 1335 320 1347 310" fill="none" stroke="#d5d5d5" stroke-width="0.8"/>
    <path d="M1262 302 C1280 340 1310 372 1347.5 392" fill="none" stroke="url(#dent)" stroke-width="8"/>
    <path d="M1256 318 C1280 360 1312 392 1347.5 412" fill="none" stroke="#9a9a9a" stroke-width="3"/>
    <path d="M1255 326 C1280 370 1315 402 1347.5 420" fill="none" stroke="#efefef" stroke-width="2.5"/>
    <path d="M1255 335 C1282 378 1318 410 1347.5 430" fill="none" stroke="#a8a8a8" stroke-width="2"/>
    <path d="M1275 551 C1290 510 1315 485 1347.5 468 V551 Z" fill="#a9a9a9"/>
    <path d="M1282 551 C1297 515 1320 492 1347.5 478" fill="none" stroke="#e3e3e3" stroke-width="2.5"/>
    <path d="M1305 551 C1315 525 1330 508 1347.5 500 V551 Z" fill="#8c8c8c"/>
    <!-- statue torso -->
    <path d="M1182.5 398 C1205 392 1235 395 1250 402 C1262 412 1262 430 1270 448 C1290 450 1305 470 1310 500 C1312 530 1300 551 1295 551 H1182.5 Z" fill="url(#bod)"/>
    <path d="M1258 356 C1266 346 1284 350 1288 366 C1290 382 1283 396 1271 401 C1263 393 1256 374 1258 356 Z" fill="#8f8f8f"/><path d="M1264 360 q4 -3 8 0 q4 3 8 0 M1266 372 q4 -3 8 0 q4 3 8 0 M1268 384 q4 -3 8 0" fill="none" stroke="#666" stroke-width="2"/>
    <path d="M1255 385 C1262 395 1270 405 1265 418 C1255 420 1248 410 1250 398 Z" fill="#9d9d9d"/>
    <path d="M1200 425 C1215 440 1228 470 1238 520 M1212 470 C1225 480 1235 505 1238 545" fill="none" stroke="#959595" stroke-width="2.5"/>
    <path d="M1262 470 C1280 455 1300 465 1305 490 C1305 510 1295 520 1280 515 C1270 505 1262 490 1262 470 Z" fill="#bdbdbd"/>
    <path d="M1240 551 C1248 525 1255 505 1265 495 C1280 505 1290 530 1290 551 Z" fill="#a0a0a0"/>
  </svg>
  <!-- title -->
  <div class="a tt" style="left:25.0px;top:73.0px;font-size:21px;font-weight:bold;color:#0a0a0a;line-height:24px">David of</div>
  <div class="a tt" style="left:25.0px;top:100.0px;font-size:21px;font-weight:bold;color:#0a0a0a;line-height:24px">Michelangelo</div>
  <svg style="left:0.0px;top:50.0px" width="200" height="100" viewBox="973 273 200 100"><path d="M1070 327 C1040 322 1005 329 996 341 C988 352 1020 355 1060 353 C1090 351 1118 345 1135 338" fill="none" stroke="#f0574a" stroke-width="4.2" stroke-linecap="round"/><path d="M1091 321 C1105 320 1120 320 1135 319.5" fill="none" stroke="#f0574a" stroke-width="4.2" stroke-linecap="round"/></svg>
  <div class="a" style="left:26.0px;top:161.5px;width:165px;height:2px;background:#f9a31b"></div>
  <div class="a" style="left:26.0px;top:175.0px;width:150px;height:2px;background:#f9a31b"></div>
  <div class="a tb" style="left:26.0px;top:135.5px">David is a <u>masterpiece</u> of <u>Renaissance</u></div>
  <div class="a tb" style="left:26.0px;top:148.8px">sculpture, created in marble between</div>
  <div class="a tb" style="left:26.0px;top:162.1px"><u>1501 and 1504</u> by the <u>Italian</u> artist</div>
  <div class="a tb" style="left:26.0px;top:175.4px"><u>Michelangelo</u>. David is a 5.17-metre (17</div>
  <div class="a tb" style="left:26.0px;top:188.7px">ft 0 in)<u>[a]</u> <u>marble statue</u> of the <span class="yh"><u>Biblical</u></span></div>
  <div class="a tb" style="left:26.0px;top:202.0px"><span class="yh">figure <u>David</u>, a favoured subject in the</span></div>
  <div class="a tb" style="left:26.0px;top:215.3px"><span class="yh">art of <u>Florence</u>.<u>[b]</u>&nbsp;</span></div>
  <div class="a tb" style="left:26.0px;top:237.9px">David was originally commissioned as</div>
  <div class="a tb" style="left:26.0px;top:251.2px">one of a series of statues of prophets to</div>
  <div class="a tb" style="left:26.0px;top:264.5px">be positioned along the roofline of the</div>
  <div class="a tb" style="left:26.0px;top:277.8px">east end of <u>Florence Cathedral</u>, but was</div>
  <div class="a tb" style="left:26.0px;top:291.1px">instead placed in a public square,</div>
  <div class="a tb" style="left:26.0px;top:304.4px">outside the <u>Palazzo Vecchio</u>, the seat of</div>
  <div class="a tb" style="left:26.0px;top:317.7px">civic government in Florence, in the</div>
  <div class="a tb" style="left:26.0px;top:331.0px">Piazza della Signoria, where it was</div>
  <div class="a tb" style="left:26.0px;top:344.3px">unveiled on 8 September 1504. The</div>
  <div class="a tb" style="left:26.0px;top:357.6px">statue was moved to the <u>Galleria</u></div>
  <div class="a tb" style="left:26.0px;top:370.9px"><u>dell'Accademia</u>, Florence, in 1873, and</div>
  <div class="a tb" style="left:26.0px;top:384.2px">later replaced at the original location by</div>
  <div class="a tb" style="left:26.0px;top:397.5px"><u>a replica</u>.</div>
  <div class="a tb" style="left:26.0px;top:420.1px">Because of the nature of the figure it</div>
  <div class="a tb" style="left:26.0px;top:433.2px">represented, the statue soon came to</div>
  <div class="a tb" style="left:26.0px;top:446.4px">symbolize the defence of civil liberties</div>
  <div class="a tb" style="left:26.0px;top:459.6px">embodied in the <u>Republic of Florence</u>,</div>
  <div class="a tb" style="left:26.0px;top:472.7px">an independent <u>city-state</u> threatened on</div>
  <div class="a tb" style="left:26.0px;top:485.9px">all sides by more powerful rival states</div>
  <div class="a tb" style="left:26.0px;top:499.0px">and by the <u>hegemony</u> of the <u>Medici</u></div>
  <div class="a tb" style="left:26.0px;top:512.1px"><u>family</u>. The eyes of David, with a</div>
  <div class="a tb" style="left:26.0px;top:525.3px">sclera and iris carved, gaze toward Rome</div>
  <div class="a tk" style="left:217.0px;top:338.0px">Artist</div>
  <div class="a tv" style="left:263.0px;top:338.0px">Michelangelo</div>
  <div class="a tk" style="left:217.0px;top:346.0px">Year</div>
  <div class="a tv" style="left:263.0px;top:346.0px">1501– c. June 8, 1504</div>
  <div class="a tk" style="left:217.0px;top:354.0px">Medium</div>
  <div class="a tv" style="left:263.0px;top:354.0px">Marble sculpture</div>
  <div class="a tk" style="left:217.0px;top:362.0px">Subject</div>
  <div class="a tv" style="left:263.0px;top:362.0px">Biblical David</div>
  <div class="a tk" style="left:217.0px;top:370.0px">Dimensions</div>
  <div class="a tv" style="left:263.0px;top:370.0px">517 cm × 199 cm (17 ft × 6.5 ft)</div>
  <div class="a" style="left:215.0px;top:377.5px;width:29px;height:8px;background:#fdf08a"></div>
  <div class="a" style="left:261.0px;top:377.5px;width:100px;height:8px;background:#fdf08a"></div>
  <div class="a tk" style="left:217.0px;top:378.0px">Location</div>
  <div class="a tv" style="left:263.0px;top:378.0px">Galleria dell'Accademia, Florence, Italy</div>
  <div class="a tk" style="left:217.0px;top:386.0px">Preceded by</div>
  <div class="a tv" style="left:263.0px;top:386.0px">Pietà (Michelangelo)</div>
  <div class="a tk" style="left:217.0px;top:394.0px">Followed by</div>
  <div class="a tv" style="left:263.0px;top:394.0px">Madonna of Bruges</div>
</div>
<!-- popover -->
<div class="a" style="left:1130px;top:273.5px;width:131px;height:122px;background:#fcfcfc;border-radius:6px;box-shadow:0 1px 5px rgba(0,0,0,.13)"></div>
<div class="a" style="left:1190px;top:270px;width:10px;height:10px;background:#fcfcfc;transform:rotate(45deg);box-shadow:-1px -1px 1px rgba(0,0,0,.04)"></div>
<div class="a tt" style="left:1182px;top:277.5px;font-size:7px;font-weight:bold;color:#333">Shapes</div>
<div class="a" style="left:1161px;top:291px;width:13px;height:13px;border:1px solid #6aa8f2;border-radius:3px"></div>
<div class="a" style="left:1163.5px;top:293.5px;width:8px;height:8px;border:1px solid #555;border-radius:1.5px"></div>
<div class="a" style="left:1181.5px;top:293.5px;width:8px;height:8px;border:1px solid #555;border-radius:50%"></div>
<svg style="left:1199px;top:293px" width="9" height="9" viewBox="0 0 9 9"><path d="M0.5 8.5 L8.5 0.5" stroke="#555" stroke-width="0.9"/></svg>
<svg style="left:1217px;top:293px" width="9" height="9" viewBox="0 0 9 9"><path d="M0.5 8.5 L8.5 0.5 M4.5 0.5 H8.5 V4.5" fill="none" stroke="#555" stroke-width="0.9"/></svg>
<div class="a tt" style="left:1135px;top:310.5px;font-size:5.6px;color:#aaa">Border Color</div>
<div class="a dot" style="left:1137px;top:323px;background:#000"></div>
<div class="a" style="left:1152px;top:320px;width:13px;height:13px;border:1px solid #6aa8f2;border-radius:3px"></div>
<div class="a dot" style="left:1155px;top:323px;background:#f33a2a"></div>
<div class="a dot" style="left:1173px;top:323px;background:#fba52b"></div>
<div class="a dot" style="left:1191px;top:323px;background:#7eea62"></div>
<div class="a dot" style="left:1208.5px;top:323px;background:#4ea2ee"></div>
<div class="a dot" style="left:1226.5px;top:323px;background:#9b63f0"></div>
<div class="a dot" style="left:1244.5px;top:323px;background:conic-gradient(#f6c343,#f25a4a,#8e5cf2,#4a90f0,#5fd05f,#f6c343)"></div>
<div class="a tt" style="left:1135px;top:339.5px;font-size:5.6px;color:#aaa">Thickness</div>
<div class="a" style="left:1136px;top:355.5px;width:2.2px;height:2.2px;border-radius:50%;background:#f33a2a"></div>
<div class="a" style="left:1150px;top:355.8px;width:90px;height:1.2px;background:#dedede"></div>
<div class="a" style="left:1150px;top:355.6px;width:15px;height:1.6px;background:#2a74ee"></div>
<div class="a" style="left:1162px;top:352.5px;width:7.5px;height:7.5px;border-radius:50%;background:#fff;box-shadow:0 0 1.5px rgba(0,0,0,.4)"></div>
<div class="a tt" style="left:1243px;top:352.5px;font-size:6px;color:#333">6 pt</div>
<div class="a tt" style="left:1135px;top:367.5px;font-size:5.6px;color:#aaa">Fill Color</div>
<div class="a" style="left:1134.5px;top:377px;width:12.5px;height:12.5px;border:1px solid #6aa8f2;border-radius:3px;background:#fff"></div>
<svg style="left:1137px;top:379.5px" width="8" height="8" viewBox="0 0 8 8"><path d="M1 7 L7 1" stroke="#f33a2a" stroke-width="0.8"/></svg>
<div class="a dot" style="left:1155px;top:379.5px;background:#f33a2a"></div>
<div class="a dot" style="left:1173px;top:379.5px;background:#fba52b"></div>
<div class="a dot" style="left:1191px;top:379.5px;background:#7eea62"></div>
<div class="a dot" style="left:1208.5px;top:379.5px;background:#4ea2ee"></div>
<div class="a dot" style="left:1226.5px;top:379.5px;background:#9b63f0"></div>
<div class="a dot" style="left:1244.5px;top:379.5px;background:conic-gradient(#f6c343,#f25a4a,#8e5cf2,#4a90f0,#5fd05f,#f6c343)"></div>
<!-- panel -->
<div class="a" id="panel" style="left:353px;top:12px;width:577px;height:109px;border-radius:12px;background:linear-gradient(#ebebeb 0,#efefef 62%,#f2f2f2 80%,#f9f9f9 82%,#fafafa 100%);box-shadow:0 2px 6px rgba(0,0,0,.05)"></div>
<div class="a" style="left:390px;top:104px;font-size:9.6px;color:#e4e4e4">Convert</div>
<div class="a" style="left:463px;top:104px;font-size:9.6px;color:#e4e4e4">Pages</div>
<div class="a" style="left:353px;top:116px;width:8px;height:2px;background:#f8c9c1"></div>
<div class="a card" style="left:384px;top:27px"></div>
<div class="a card" style="left:491px;top:27px"></div>
<div class="a card" style="left:598px;top:27px"></div>
<div class="a card" style="left:704px;top:27px"></div>
<div class="a card" style="left:811px;top:27px"></div>
<!-- pptx -->
<div class="a ic" style="left:392px;top:36px;background:#ee4a3b"></div>
<div class="a ict" style="left:393px;top:36.5px;font-size:23px;line-height:25px">P</div>
<svg style="left:426px;top:41px" width="24" height="24" viewBox="0 0 24 24"><path d="M12 12 V0.5 A11.5 11.5 0 1 0 23.5 12 Z" fill="#f6c7be"/><path d="M13.5 1.8 A10 10 0 0 1 22.2 10.5" fill="none" stroke="#ee4a3b" stroke-width="1.8"/></svg>
<div class="a ft" style="left:391px;top:75px;color:#ee4a3b">.PPTX</div>
<!-- xls -->
<div class="a ic" style="left:498px;top:36px;background:#1fbe5b"></div>
<div class="a ict" style="left:498.5px;top:37px;font-size:24px;line-height:25px">X</div>
<div class="a ft" style="left:492px;top:70px;color:#1db758;font-size:11px">.XLS</div>
<div class="a" style="left:528px;top:61px;width:9px;height:25px;background:#bdedd3"></div>
<div class="a" style="left:540px;top:51px;width:9px;height:35px;background:#8fdcb2"></div>
<div class="a" style="left:552px;top:61px;width:9px;height:25px;background:#bdedd3"></div>
<!-- pdf -->
<div class="a ic" style="left:605px;top:36px;background:#f03c27"></div>
<svg style="left:608px;top:39px" width="19" height="19" viewBox="0 0 19 19"><path d="M9.7 3 C8.6 3 8.8 5.5 9.6 8 L6.5 13.5 C4 14.5 3 15.7 3.9 16.2 C4.8 16.7 6 15 6.8 13.6 L12 12.5 C13.5 14 15.8 14.6 16 13.7 C16.2 12.8 14.5 12.5 12.2 12.3 L9.8 8.2 C10.6 5.6 10.8 3 9.7 3 Z" fill="none" stroke="#fff" stroke-width="1.1"/></svg>
<div class="a ft" style="left:605px;top:72px;color:#ee3b2a">.PDF</div>
<div class="a bar" style="left:647px;top:56px;width:16px;height:7px;background:#f06358"></div>
<div class="a bar" style="left:643.5px;top:69px;width:19.5px;height:7px;background:#f06358"></div>
<div class="a bar" style="left:635px;top:82px;width:28px;height:7px;background:#f06358"></div>
<!-- html -->
<div class="a ic" style="left:712px;top:36px;background:#1fbe5b"></div>
<svg style="left:712px;top:36px" width="25" height="25" viewBox="0 0 25 25"><path d="M6 4.5 H19.5 L19 9 H10.5 L10.8 11.3 H18.7 L17.8 18.5 L12.3 20.3 L6.8 18.5 L6.5 15 H10 L10.2 16.3 L12.3 17 L14.5 16.3 L14.8 14 H7 Z" fill="#fff"/></svg>
<div class="a ft" style="left:712px;top:72px;color:#1db758">.HTML</div>
<div class="a bar" style="left:754px;top:49px;width:16px;height:7px;background:#bcedcd"></div>
<div class="a bar" style="left:750px;top:62px;width:20px;height:7px;background:#bcedcd"></div>
<div class="a bar" style="left:717px;top:88px;width:54px;height:6.5px;background:#bcedcd"></div>
<!-- doc -->
<div class="a ic" style="left:818px;top:36px;background:#2277e9"></div>
<div class="a ict" style="left:818px;top:36px;font-size:15px;font-weight:normal;line-height:24px">W</div>
<div class="a ft" style="left:818px;top:73px;color:#1f75e7;font-size:14.5px;font-weight:bold">.doc</div>
<div class="a bar" style="left:858px;top:66px;width:17px;height:6px;background:#1f75e7"></div>
<div class="a bar" style="left:854px;top:78.5px;width:24.5px;height:6px;background:#1f75e7"></div>
</body></html>
